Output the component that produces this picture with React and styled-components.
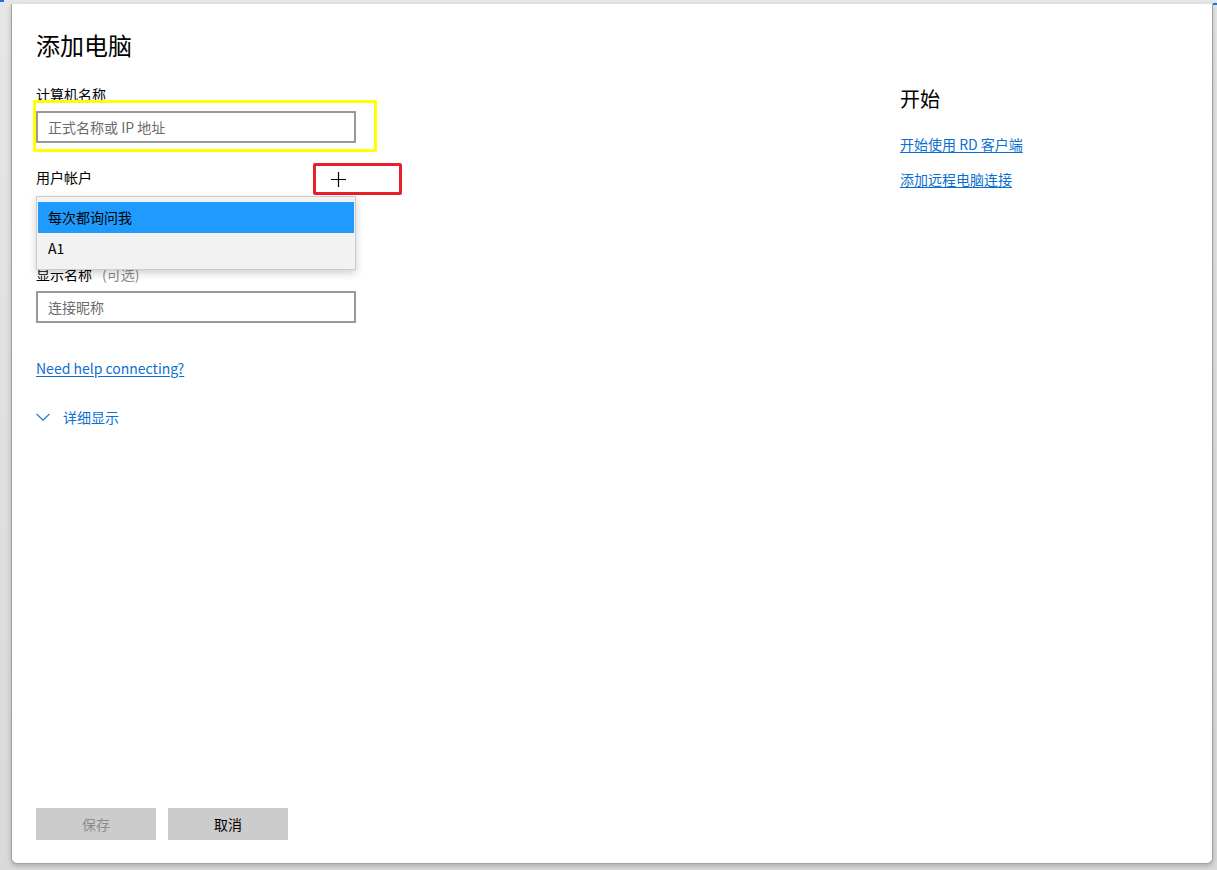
import React from 'react'
import styled, { createGlobalStyle } from 'styled-components'

const GlobalStyle = createGlobalStyle`
    html, body {
        margin: 0;
        padding: 0;
        height: 870px;
        overflow: hidden;
    }
    body {
        background: linear-gradient(#e6e6e6, #d9d9d9);
        font-family: "Segoe UI", "Noto Sans CJK SC", "Noto Sans", sans-serif;
        color: #000;
    }
`

const Page = styled.div`
    position: relative;
    height: 870px;
    padding: 4px 4px 0 11px;
    box-sizing: border-box;

    &::before {
        content: '';
        position: absolute;
        left: 0;
        top: 0;
        width: 4px;
        height: 2px;
        background: #1a73e8;
    }

    &::after {
        content: '';
        position: absolute;
        right: 0;
        top: 3px;
        width: 4px;
        height: 2px;
        background: #1a73e8;
    }
`

const Dialog = styled.div`
    height: 860px;
    box-sizing: border-box;
    background: #fff;
    border: 1px solid #a3a3a3;
    border-top: none;
    border-radius: 0 0 6px 6px;
    box-shadow: 0 2px 5px rgba(0, 0, 0, 0.22);
    display: flex;
    flex-direction: column;
    padding: 25px 0 23px 24px;
`

const Body = styled.div`
    flex: 1;
    display: grid;
    grid-template-columns: 864px 1fr;
`

const LeftColumn = styled.div`
    display: flex;
    flex-direction: column;
    align-items: flex-start;
`

const RightColumn = styled.div`
    display: flex;
    flex-direction: column;
    align-items: flex-start;
    padding-top: 56px;
`

const Title = styled.h1`
    margin: 0;
    font-size: 24px;
    font-weight: 400;
    line-height: 32px;
`

const SideTitle = styled.h2`
    margin: 0;
    font-size: 20px;
    font-weight: 400;
    line-height: 28px;
`

const Label = styled.div`
    font-size: 14px;
    line-height: 20px;
    margin-top: ${p => p.$top || 0}px;
`

const Hint = styled.span`
    color: #8a8a8a;
    margin-left: 10px;
`

const Field = styled.div`
    position: relative;
    margin-top: 7px;
    width: 320px;
`

const TextBox = styled.div`
    width: 320px;
    height: 32px;
    box-sizing: border-box;
    border: 2px solid #999;
    padding: 0 10px;
    font-size: 14px;
    line-height: 28px;
    color: #6b6b6b;
`

const Highlight = styled.div`
    position: absolute;
    box-sizing: border-box;
    border: 3px solid ${p => p.$color};
    left: ${p => p.$left}px;
    top: ${p => p.$top}px;
    width: ${p => p.$w}px;
    height: ${p => p.$h}px;
    border-radius: 2px;
`

const AccountRow = styled.div`
    position: relative;
    width: 320px;
    margin-top: 24px;
`

const PlusMark = styled.div`
    position: absolute;
    left: 295px;
    top: 5px;
    width: 15px;
    height: 15px;
    line-height: 0;
`

const Select = styled.div`
    position: relative;
    width: 320px;
    height: 32px;
    margin-top: 9px;
`

const Menu = styled.ul`
    position: absolute;
    left: 0;
    top: 0;
    width: 320px;
    box-sizing: border-box;
    margin: 0;
    padding: 5px 1px;
    list-style: none;
    background: #f2f2f2;
    border: 1px solid #cccccc;
    box-shadow: 0 3px 8px rgba(0, 0, 0, 0.2);
    z-index: 2;
`

const MenuItem = styled.li`
    height: 31px;
    padding-left: 10px;
    font-size: 14px;
    line-height: 31px;
    background: ${p => (p.$selected ? '#1f9bff' : 'transparent')};
    color: #000;
`

const Link = styled.a`
    font-size: 14px;
    line-height: 20px;
    color: #0b6fd1;
    text-decoration: underline;
    text-underline-offset: 2px;
    margin-top: ${p => p.$top}px;
    cursor: pointer;
`

const Expander = styled.div`
    display: flex;
    align-items: center;
    gap: 13px;
    margin-top: 29px;
    font-size: 14px;
    line-height: 20px;
    color: #0b6fd1;
`

const Footer = styled.div`
    display: flex;
    gap: 12px;
`

const Button = styled.button`
    width: 120px;
    height: 32px;
    border: none;
    background: #cccccc;
    font-family: inherit;
    font-size: 14px;
    color: ${p => (p.disabled ? '#8c8c8c' : '#000')};
    padding: 0;
`

const App = () => {
    return (
        <>
            <GlobalStyle />
            <Page>
                <Dialog>
                    <Body>
                        <LeftColumn>
                            <Title>添加电脑</Title>
                            <Label $top={23}>计算机名称</Label>
                            <Field>
                                <TextBox>正式名称或 IP 地址</TextBox>
                                <Highlight $color="#ffff00" $left={-3} $top={-11} $w={344} $h={52} />
                            </Field>
                            <AccountRow>
                                <Label>用户帐户</Label>
                                <Highlight $color="#e8202c" $left={277} $top={-4} $w={89} $h={32} />
                                <PlusMark>
                                    <svg width="15" height="15" viewBox="0 0 15 15">
                                        <path d="M7.5 0v15M0 7.5h15" stroke="#000" strokeWidth="1.2" fill="none" />
                                    </svg>
                                </PlusMark>
                            </AccountRow>
                            <Select>
                                <Menu>
                                    <MenuItem $selected>每次都询问我</MenuItem>
                                    <MenuItem>A1</MenuItem>
                                </Menu>
                            </Select>
                            <Label $top={36}>
                                显示名称<Hint>(可选)</Hint>
                            </Label>
                            <Field>
                                <TextBox>连接昵称</TextBox>
                            </Field>
                            <Link $top={35}>Need help connecting?</Link>
                            <Expander>
                                <svg width="14" height="8" viewBox="0 0 14 8">
                                    <path d="M0.5 0.8 7 7.2 13.5 0.8" stroke="#0b6fd1" strokeWidth="1.1" fill="none" />
                                </svg>
                                详细显示
                            </Expander>
                        </LeftColumn>
                        <RightColumn>
                            <SideTitle>开始</SideTitle>
                            <Link $top={21}>开始使用 RD 客户端</Link>
                            <Link $top={15}>添加远程电脑连接</Link>
                        </RightColumn>
                    </Body>
                    <Footer>
                        <Button disabled>保存</Button>
                        <Button>取消</Button>
                    </Footer>
                </Dialog>
            </Page>
        </>
    )
}

export default App
